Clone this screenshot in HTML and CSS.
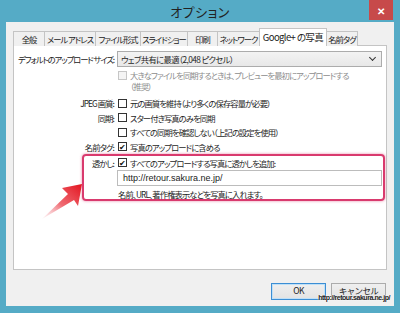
FILE: index.html
```html
<!DOCTYPE html>
<html>
<head>
   <meta charset="UTF-8">
   <title>オプション</title>
   <link rel="stylesheet" href="styles.css">
</head>
<body>
   <div class="window">
      <div class="titlebar">
         <span class="title">オプション</span>
         <div class="close">&#x2715;</div>
      </div>
      <div class="client">
         <div class="tabs">
            <div class="tab t-general">全般</div>
            <div class="tab t-mail">メール アドレス</div>
            <div class="tab t-format">ファイル形式</div>
            <div class="tab t-slide">スライドショー</div>
            <div class="tab t-print">印刷</div>
            <div class="tab t-net">ネットワーク</div>
            <div class="tab t-google selected">Google+ の写真</div>
            <div class="tab t-tags">名前タグ</div>
         </div>
         <div class="panel">
            <div class="row select-row">
               <label class="label">デフォルトのアップロード&nbsp;サイズ:</label>
               <div class="select">
                  <span>ウェブ共有に最適（2,048 ピクセル）</span>
                  <span class="chevron"></span>
               </div>
            </div>
            <div class="row wrap-row">
               <span class="label"></span>
               <div class="check disabled"><span class="box"></span><span class="text">大きなファイルを同期するときは、プレビューを最初にアップロードする<br>（推奨）</span></div>
            </div>
            <div class="row">
               <label class="label">JPEG 画質:</label>
               <div class="check"><span class="box"></span><span class="text">元の画質を維持（より多くの保存容量が必要）</span></div>
            </div>
            <div class="row">
               <label class="label">同期:</label>
               <div class="check"><span class="box"></span><span class="text">スター付き写真のみを同期</span></div>
            </div>
            <div class="row">
               <span class="label"></span>
               <div class="check"><span class="box"></span><span class="text">すべての同期を確認しない（上記の設定を使用）</span></div>
            </div>
            <div class="row">
               <label class="label">名前タグ:</label>
               <div class="check"><span class="box checked">&#x2714;</span><span class="text">写真のアップロードに含める</span></div>
            </div>
            <div class="highlight">
               <div class="row">
                  <label class="label">透かし:</label>
                  <div class="check"><span class="box checked">&#x2714;</span><span class="text">すべてのアップロードする写真に透かしを追加:</span></div>
               </div>
               <div class="row input-row">
                  <span class="label"></span>
                  <div class="textbox">http://retour.sakura.ne.jp/</div>
               </div>
               <div class="row">
                  <span class="label"></span>
                  <div class="hint">名前、URL、著作権表示などを写真に入れます。</div>
               </div>
            </div>
         </div>
         <div class="buttons">
            <button class="btn default">OK</button>
            <button class="btn">キャンセル</button>
         </div>
      </div>
      <svg class="arrow" width="60" height="50" viewBox="0 0 60 50">
         <defs>
            <linearGradient id="arrowGrad" x1="0" y1="1" x2="1" y2="0">
               <stop offset="0" stop-color="#f7c6cc" stop-opacity="0.2"/>
               <stop offset="0.45" stop-color="#ef6a72"/>
               <stop offset="1" stop-color="#e3141f"/>
            </linearGradient>
         </defs>
         <polygon points="52,9 32,13 38,19 12,44 44,25 48,31" fill="url(#arrowGrad)"/>
      </svg>
      <div class="stamp">http://retour.sakura.ne.jp/</div>
   </div>
</body>
</html>
```

FILE: styles.css
```css
body {
   margin: 0;
   background-color: #55abc6;
   font-family: "Noto Sans CJK JP", "Noto Sans", sans-serif;
   font-feature-settings: "palt";
   color: #1e1e1e;
}
.window {
   position: relative;
   width: 400px;
   height: 313px;
   background-color: #55abc6;
   overflow: hidden;
}
.titlebar {
   height: 22px;
   display: flex;
   align-items: center;
   justify-content: center;
   position: relative;
}
.title {
   font-size: 13px;
   color: #222;
   letter-spacing: 0.5px;
}
.close {
   position: absolute;
   right: 7px;
   top: 0;
   width: 24px;
   height: 20px;
   background-color: #c74a4a;
   color: #fff;
   font-size: 10px;
   font-weight: bold;
   display: flex;
   align-items: center;
   justify-content: center;
}
.client {
   margin: 0 6px 0 6px;
   height: 284px;
   background-color: #f0f0f0;
   padding: 7px 7px 0 7px;
   box-sizing: border-box;
   display: flex;
   flex-direction: column;
   letter-spacing: -0.9px;
}
.tabs {
   display: flex;
   align-items: flex-end;
   height: 17px;
   margin-bottom: -1px;
   position: relative;
   z-index: 1;
}
.tab {
   height: 14px;
   box-sizing: content-box;
   font-size: 8.3px;
   line-height: 14px;
   letter-spacing: -1px;
   margin-right: -1px;
   border: 1px solid #c4c4c4;
   border-bottom: none;
   background-color: #f0f0f0;
   color: #222;
   white-space: nowrap;
   text-align: center;
}
.t-general { width: 30px; }
.t-mail { width: 50px; }
.t-format { width: 44px; }
.t-slide { width: 46px; }
.t-print { width: 29px; }
.t-net { width: 41px; }
.t-google { width: 66px; }
.t-tags { width: 30px; }
.tab.selected {
   height: 17px;
   line-height: 16px;
   background-color: #fff;
   font-size: 9.5px;
   letter-spacing: -0.6px;
}
.panel {
   width: 374px;
   height: 225px;
   box-sizing: border-box;
   background-color: #fff;
   border: 1px solid #c4c4c4;
   padding-top: 5px;
}
.row {
   display: grid;
   grid-template-columns: 100px 1fr;
   column-gap: 4px;
   align-items: center;
   font-size: 8.3px;
   height: 14.5px;
}
.label {
   text-align: right;
   white-space: nowrap;
   color: #222;
}
.select-row {
   height: 16px;
   margin-bottom: 3px;
   grid-template-columns: 100px 265px;
   column-gap: 3px;
}
.select-row .label {
   letter-spacing: -1.1px;
}
.select {
   height: 16px;
   box-sizing: border-box;
   border: 1px solid #acacac;
   background: linear-gradient(#f3f3f3, #e8e8e8);
   display: flex;
   align-items: center;
   justify-content: space-between;
   padding: 0 6px 0 3px;
   font-size: 8.3px;
   letter-spacing: -0.6px;
}
.chevron {
   width: 4px;
   height: 4px;
   border-right: 1px solid #333;
   border-bottom: 1px solid #333;
   transform: rotate(45deg);
   margin-top: -3px;
}
.wrap-row {
   height: 24px;
   align-items: start;
   margin-bottom: 2px;
}
.check {
   display: flex;
   align-items: center;
   white-space: nowrap;
}
.wrap-row .check {
   align-items: flex-start;
}
.box {
   width: 9px;
   height: 9px;
   box-sizing: border-box;
   border: 1px solid #333;
   background-color: #fff;
   margin-right: 3px;
   flex-shrink: 0;
   font-size: 8px;
   line-height: 8px;
   letter-spacing: 0;
   text-align: center;
   color: #111;
}
.disabled .box {
   border-color: #c6c6c6;
   background-color: #f4f4f4;
   margin-top: 1px;
}
.disabled .text {
   color: #8d8d8d;
   line-height: 10.5px;
}
.highlight {
   margin: 0 1px 0 68px;
   height: 47px;
   box-sizing: border-box;
   border: 2px solid #d93a6e;
   border-radius: 4px;
   box-shadow: 0 0 3px rgba(217, 58, 110, 0.6);
}
.highlight .row {
   grid-template-columns: 30px 1fr;
   column-gap: 4px;
   height: 13px;
}
.highlight .input-row {
   height: 18px;
   grid-template-columns: 30px 265px;
   column-gap: 3px;
}
.textbox {
   height: 16px;
   box-sizing: border-box;
   border: 1px solid #bcbcbc;
   font-size: 9px;
   line-height: 14px;
   padding: 0 5px;
   color: #222;
   letter-spacing: 0;
   font-family: "Liberation Sans", sans-serif;
}
.hint {
   color: #222;
   white-space: nowrap;
}
.buttons {
   display: flex;
   justify-content: flex-end;
   gap: 5px;
   margin-top: 13px;
   padding-right: 1px;
}
.btn {
   width: 55px;
   height: 17px;
   font-family: "Noto Sans CJK JP", sans-serif;
   font-size: 8.5px;
   letter-spacing: -0.6px;
   padding: 0 0 3px 0;
   border: 1px solid #acacac;
   background: linear-gradient(#efefef, #e3e3e3);
   color: #222;
}
.btn.default {
   border-color: #3c8ed4;
   box-shadow: inset 0 0 0 1px #bfe0f7;
}
.arrow {
   position: absolute;
   left: 30px;
   top: 175px;
}
.stamp {
   position: absolute;
   right: 10px;
   top: 294px;
   font-family: "Liberation Sans", sans-serif;
   font-size: 7px;
   font-weight: bold;
   color: #222;
   text-shadow: 0 0 1px #fff, 0 0 2px #fff;
   letter-spacing: -0.45px;
}
```
